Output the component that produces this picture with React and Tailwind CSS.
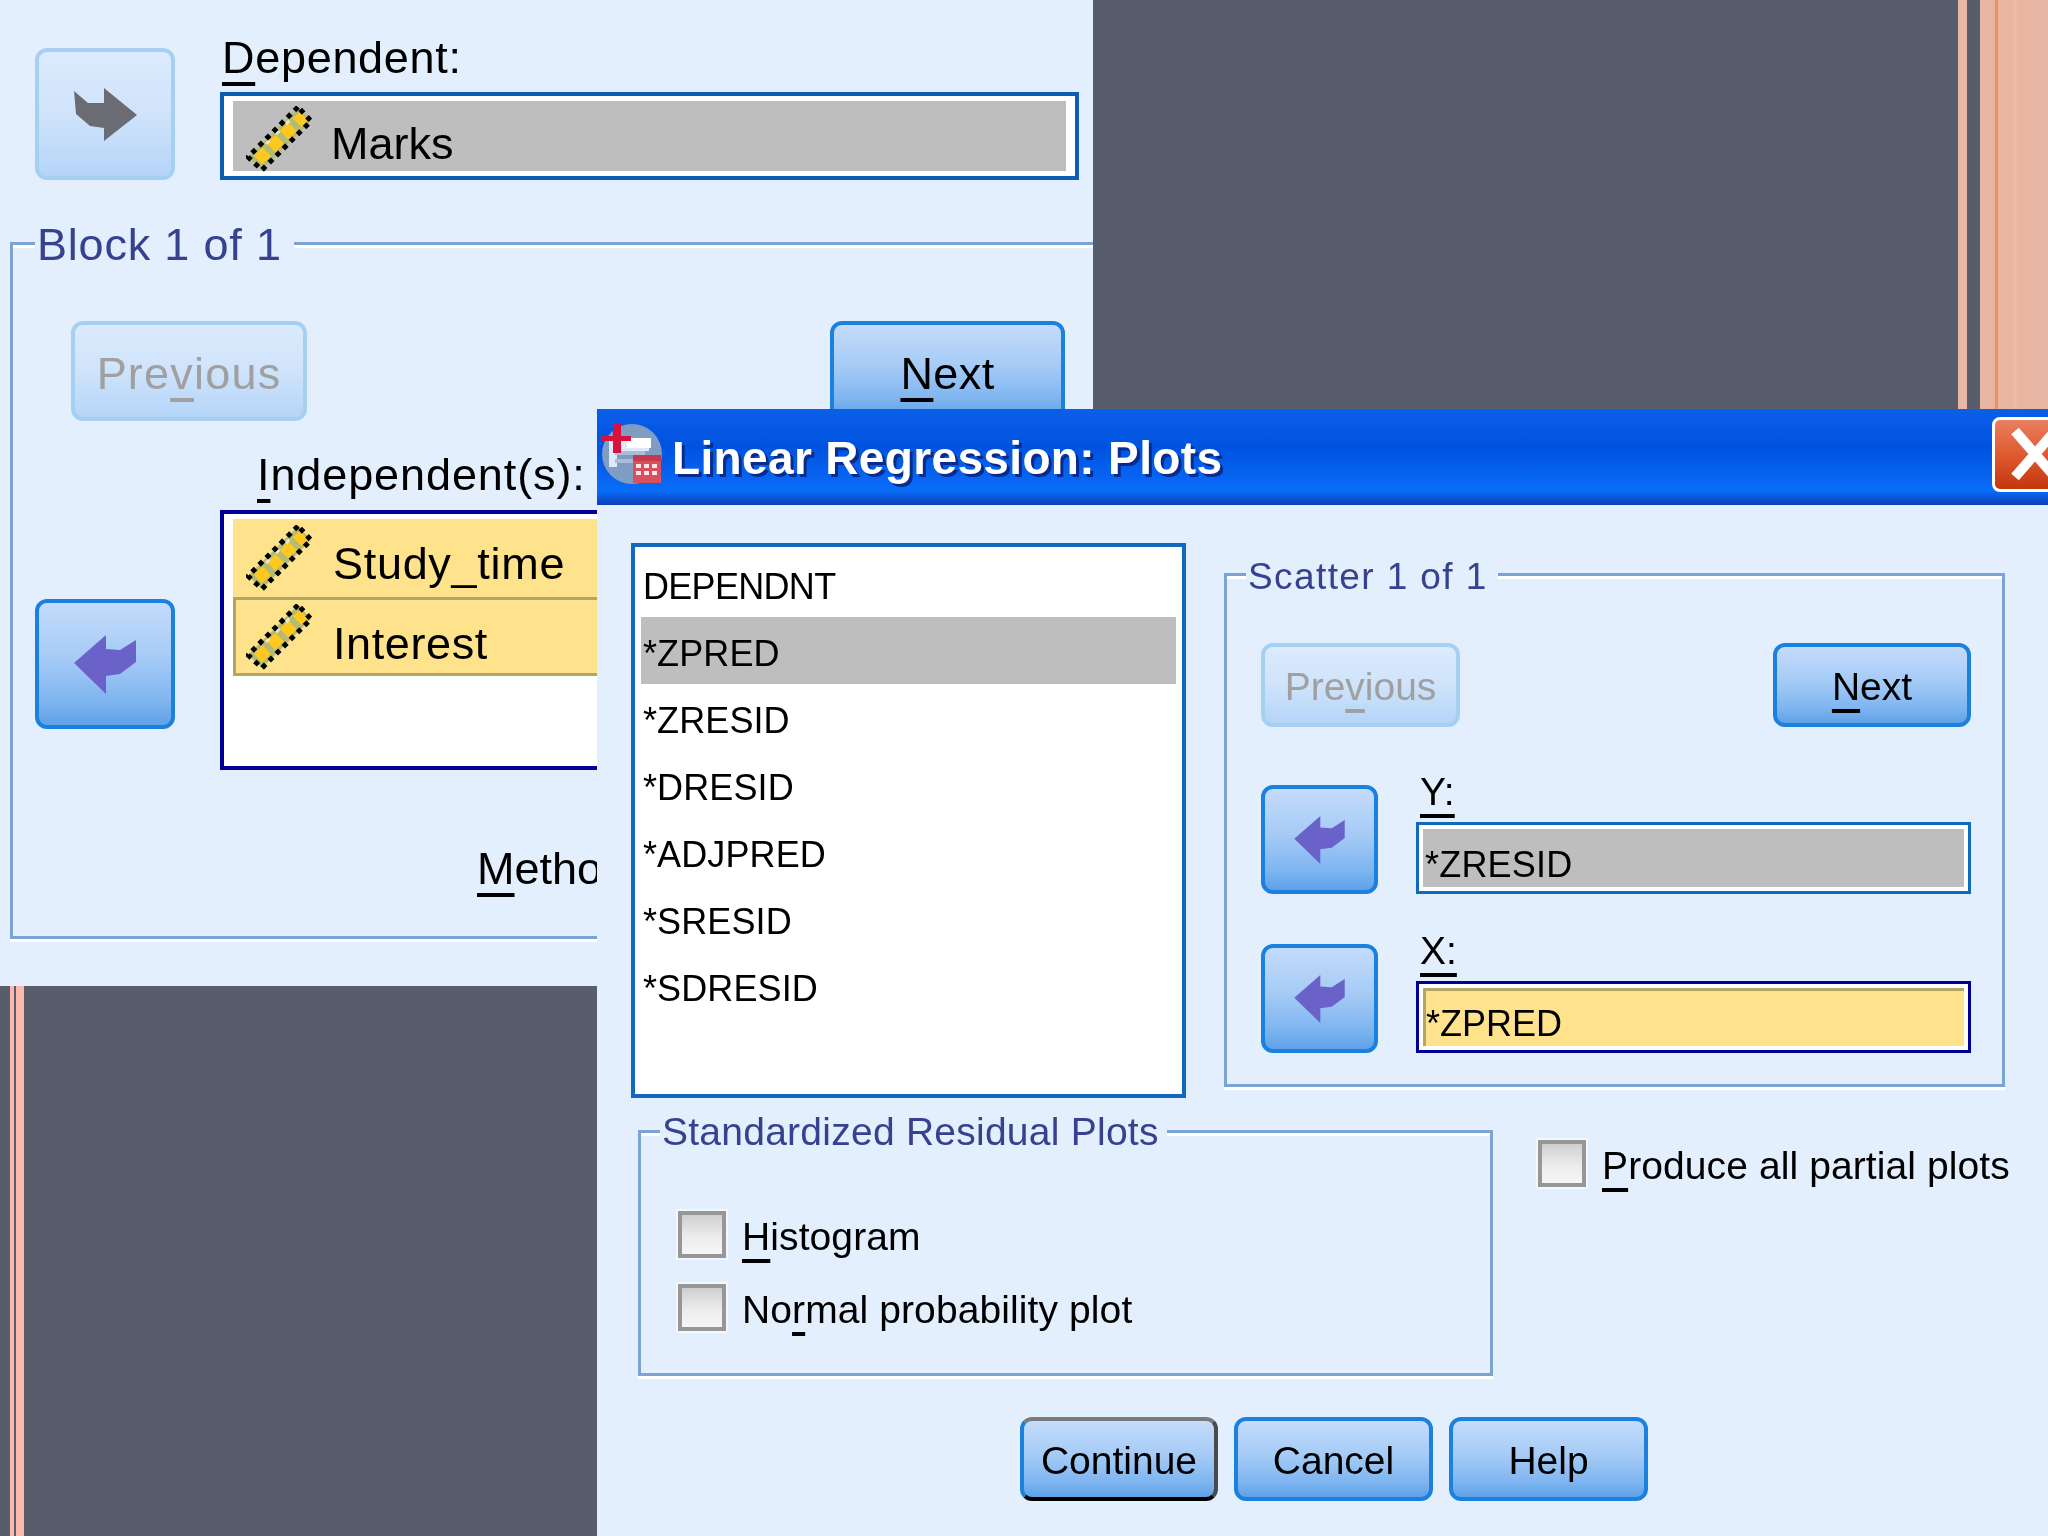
import React from 'react';

const font = "font-['Liberation_Sans',Arial,sans-serif]";

// first-letter mnemonic underline
function Mn({ children }) {
  return (
    <span className="underline decoration-[4px] underline-offset-[9px] [text-decoration-skip-ink:none]">
      {children}
    </span>
  );
}

function Ruler({ className = '' }) {
  return (
    <svg width="66" height="66" viewBox="0 0 66 66" className={`shrink-0 ${className}`}>
      <polygon points="52,1 2,51 16,64 65,15" fill="#b5bb72" />
      <line x1="12" y1="54" x2="58" y2="10" stroke="#ffc81e" strokeWidth="12" strokeDasharray="12 6" />
      <line x1="20" y1="38" x2="46" y2="12" stroke="#e8e8d0" strokeWidth="3" strokeDasharray="5 9" />
      <polygon points="52,1 2,51 16,64 65,15" fill="none" stroke="#000" strokeWidth="5" strokeDasharray="5 5" />
    </svg>
  );
}

function LeftArrow({ w = 62, h = 59, fill = '#6a62c8' }) {
  return (
    <svg width={w} height={h} viewBox="0 0 62 59">
      <polygon points="0,28 32,0 32,14 46,15 62,5 62,27 46,39 32,41 32,59" fill={fill} />
    </svg>
  );
}

function RightArrow() {
  return (
    <svg width="63" height="53" viewBox="0 0 63 53">
      <polygon points="0,3 14,15 30,15 30,0 63,27 30,53 30,40 16,38 2,26" fill="#6b6b73" />
    </svg>
  );
}

const btn =
  'flex items-center justify-center rounded-[12px] border-[4px] border-[#1c80de] bg-[linear-gradient(180deg,#c4dbfb_0%,#a5cbf6_45%,#7fb5f0_80%,#5ea2e8_100%)] text-black';
const btnOff =
  'flex items-center justify-center rounded-[12px] border-[4px] border-[#a6cff4] bg-[linear-gradient(180deg,#dcebfd_0%,#cfe3fb_50%,#b4d5f8_100%)] text-[#a0a0a0]';

function Checkbox() {
  return (
    <div className="w-[48px] h-[47px] shrink-0 border-[4px] border-[#979797] bg-[linear-gradient(180deg,#cfcfcf_0%,#ececec_55%,#f6f6f6_100%)] shadow-[0_0_0_2px_#f4f8fe]" />
  );
}

function CheckRow({ children, className = '' }) {
  return (
    <div className={`flex items-center gap-[16px] ${className}`}>
      <Checkbox />
      <span className="text-[39px] leading-[47px] tracking-[0.1px] text-black whitespace-nowrap pt-[4px]">{children}</span>
    </div>
  );
}

const groupLine = 'border-[3px] border-[#7ba4d2] shadow-[0_3px_0_#fff,inset_0_3px_0_#fff]';
const legendText = 'bg-[#e3effd] text-[#36418f] whitespace-nowrap';

function BackWindow() {
  return (
    <div className="absolute left-0 top-0 w-[1093px] h-[986px] bg-[#e3effd] overflow-hidden text-black text-[45px]">
      <div className="flex pl-[35px] pt-[36px]">
        <div className={`${btnOff} w-[140px] h-[132px] mt-[12px] shrink-0`}>
          <RightArrow />
        </div>
        <div className="ml-[45px] flex-1">
          <div className="h-[56px] leading-[44px] pl-[2px] tracking-[0.7px]">
            <Mn>D</Mn>ependent:
          </div>
          <div className="h-[88px] border-[4px] border-[#0f5cb5] bg-white py-[5px] px-[9px]">
            <div className="h-full bg-[#bebebe] flex items-center pl-[13px]">
              <Ruler className="mt-[5px]" />
              <span className="ml-[19px] pt-[16px]">Marks</span>
            </div>
          </div>
        </div>
        <div className="w-[14px] shrink-0" />
      </div>

      <fieldset className={`${groupLine} ml-[10px] mt-[37px] w-[1300px] pb-[42px]`}>
        <legend className={`${legendText} ml-[22px] pl-[2px] pr-[12px] pt-[4px] leading-[48px] tracking-[0.8px]`}>
          Block 1 of 1
        </legend>
        <div className="flex justify-between w-[994px] ml-[58px] mt-[52px]">
          <div className={`${btnOff} w-[236px] h-[100px] pt-[5px]`}>
            <span className="tracking-[1.2px]">
              Pre<Mn>v</Mn>ious
            </span>
          </div>
          <div className={`${btn} w-[235px] h-[100px] pt-[5px]`}>
            <span className="tracking-[0.4px]">
              <Mn>N</Mn>ext
            </span>
          </div>
        </div>
        <div className="flex ml-[22px]">
          <div className={`${btn} w-[140px] h-[130px] mt-[178px] shrink-0`}>
            <LeftArrow />
          </div>
          <div className="ml-[45px] flex-1">
            <div className="mt-[29px] ml-[37px] leading-[50px] tracking-[0.9px]">
              <Mn>I</Mn>ndependent(s):
            </div>
            <div className="mt-[10px] h-[260px] border-[4px] border-[#000099] bg-white pt-[5px] pl-[9px]">
              <div className="h-[78px] bg-[#ffe28c] flex items-center pl-[13px]">
                <Ruler />
                <span className="ml-[21px] pt-[12px] tracking-[0.7px]">Study_time</span>
              </div>
              <div className="h-[79px] bg-[#ffe28c] border-[3px] border-r-0 border-[#b3a566] flex items-center pl-[10px]">
                <Ruler />
                <span className="ml-[21px] pt-[15px] tracking-[0.6px]">Interest</span>
              </div>
            </div>
            <div className="mt-[74px] ml-[257px] leading-[50px]">
              <Mn>M</Mn>ethod:
            </div>
          </div>
        </div>
      </fieldset>
    </div>
  );
}

const vars = ['DEPENDNT', '*ZPRED', '*ZRESID', '*DRESID', '*ADJPRED', '*SRESID', '*SDRESID'];

function AppIcon() {
  return (
    <svg width="72" height="72" viewBox="0 0 72 72" className="shrink-0">
      <circle cx="33" cy="33" r="30" fill="#7f9cc2" />
      <path d="M10 18 H50 V30 H18 V46 H10 Z" fill="#dfe8f4" />
      <path d="M28 17 H52 V27 H28 Z" fill="#fff" />
      <path d="M16 30 H46 V34 H16 Z M16 38 H34 V42 H16 Z" fill="#a7bedb" />
      <rect x="2" y="15" width="30" height="5" fill="#d8123c" />
      <rect x="14" y="3" width="8" height="29" fill="#d8123c" />
      <rect x="34" y="34" width="28" height="28" fill="#d8505f" />
      <rect x="34" y="34" width="28" height="6" fill="#c5394a" />
      <path d="M37 43 H42 V47 H37 Z M45 43 H50 V47 H45 Z M53 43 H58 V47 H53 Z M37 50 H42 V54 H37 Z M45 50 H50 V54 H45 Z M53 50 H58 V54 H53 Z" fill="#ffe3e6" />
    </svg>
  );
}

function FrontWindow() {
  return (
    <div className="absolute left-[597px] top-[409px] w-[1451px] h-[1127px] bg-[#e3effd] overflow-hidden text-black">
      {/* title bar */}
      <div className="relative h-[96px] flex items-center pl-[2px] bg-[linear-gradient(180deg,#0a5fe8_0%,#0052e0_40%,#0a6df8_85%,#0a3fb8_100%)]">
        <AppIcon />
        <span className="ml-[1px] pt-[2px] text-[46px] tracking-[0.35px] font-bold text-white [text-shadow:3px_3px_0_#0a2a8c] whitespace-nowrap">
          Linear Regression: Plots
        </span>
        <div className="absolute left-[1395px] top-[8px] w-[90px] h-[75px] rounded-[8px] border-[3px] border-white bg-[linear-gradient(180deg,#e8805f_0%,#df5a30_50%,#c2360e_100%)]">
          <svg width="60" height="56" viewBox="0 0 60 56" className="absolute left-[16px] top-[7px]">
            <path d="M4 4 L44 50 M44 4 L4 50" stroke="#fff" strokeWidth="10" />
          </svg>
        </div>
      </div>

      <div className="pl-[34px]">
        <div className="flex items-start mt-[38px]">
          <div className="w-[555px] h-[555px] border-[4px] border-[#0f69bd] bg-white pt-[3px] px-[6px] text-[36px]">
            {vars.map((v) => (
              <div
                key={v}
                className={`h-[67px] pl-[2px] pt-[7px] flex items-center ${v === '*ZPRED' ? 'bg-[#bebebe]' : ''} ${
                  v === 'DEPENDNT' ? 'tracking-[-0.7px]' : 'tracking-[0.1px]'
                }`}
              >
                {v}
              </div>
            ))}
          </div>

          <fieldset className={`${groupLine} ml-[38px] mt-[7px] w-[781px] pb-[31px]`}>
            <legend className={`${legendText} ml-[19px] pl-[2px] pr-[10px] pt-[5px] text-[37px] leading-[44px] tracking-[1.4px]`}>
              Scatter 1 of 1
            </legend>
            <div className="ml-[34px] w-[710px] text-[39px]">
              <div className="flex justify-between mt-[44px]">
                <div className={`${btnOff} w-[199px] h-[84px] pt-[4px]`}>
                  <span>
                    Pre<Mn>v</Mn>ious
                  </span>
                </div>
                <div className={`${btn} w-[198px] h-[84px] pt-[4px]`}>
                  <span>
                    <Mn>N</Mn>ext
                  </span>
                </div>
              </div>

              <div className="flex items-end mt-[44px]">
                <div className={`${btn} w-[117px] h-[109px] shrink-0`}>
                  <LeftArrow w={51} h={48} />
                </div>
                <div className="ml-[38px] flex-1">
                  <div className="h-[51px] leading-[42px] pl-[4px]">
                    <Mn>Y:</Mn>
                  </div>
                  <div className="h-[72px] border-[3px] border-[#0f69bd] bg-white p-[4px]">
                    <div className="h-full bg-[#bebebe] flex items-center pl-[2px] pt-[13px] text-[36px] tracking-[0.2px]">*ZRESID</div>
                  </div>
                </div>
              </div>

              <div className="flex items-end mt-[36px]">
                <div className={`${btn} w-[117px] h-[109px] shrink-0`}>
                  <LeftArrow w={51} h={48} />
                </div>
                <div className="ml-[38px] flex-1">
                  <div className="h-[51px] leading-[42px] pl-[4px]">
                    <Mn>X:</Mn>
                  </div>
                  <div className="h-[72px] border-[3px] border-[#000099] bg-white p-[4px]">
                    <div className="h-full bg-[#ffe28c] border-t-[3px] border-l-[3px] border-[#b3a566] flex items-center pt-[11px] text-[36px]">
                      *ZPRED
                    </div>
                  </div>
                </div>
              </div>
            </div>
          </fieldset>
        </div>

        <div className="flex items-start mt-[10px] ml-[7px]">
          <fieldset className={`${groupLine} w-[855px] pb-[40px]`}>
            <legend className={`${legendText} ml-[19px] pl-[2px] pr-[8px] pt-[2px] text-[39px] leading-[44px] tracking-[0.25px]`}>
              Standardized Residual Plots
            </legend>
            <div className="ml-[37px] mt-[55px] flex flex-col gap-[22px]">
              <CheckRow>
                <Mn>H</Mn>istogram
              </CheckRow>
              <CheckRow>
                No<Mn>r</Mn>mal probability plot
              </CheckRow>
            </div>
          </fieldset>
          <CheckRow className="ml-[45px] mt-[30px]">
            <Mn>P</Mn>roduce all partial plots
          </CheckRow>
        </div>

        <div className="flex gap-[16px] ml-[389px] mt-[41px] text-[39px]">
          <div className={`${btn} w-[198px] h-[84px] pt-[4px] border-t-[#7a7a7a] border-r-[#4a4a4a] border-b-black`}>Continue</div>
          <div className={`${btn} w-[199px] h-[84px] pt-[4px]`}>Cancel</div>
          <div className={`${btn} w-[199px] h-[84px] pt-[4px]`}>Help</div>
        </div>
      </div>
    </div>
  );
}

export default function App() {
  return (
    <div className={`relative w-[2048px] h-[1536px] overflow-hidden bg-[#585d6b] blur-[0.6px] ${font}`}>
      {/* slide edge showing behind the dialogs */}
      <div className="absolute left-[1958px] top-0 w-[9px] h-[409px] bg-[#e9b7a6]" />
      <div className="absolute left-[1980px] top-0 w-[68px] h-[409px] flex bg-[#e8b5a2]">
        <div className="ml-[15px] w-[3px] h-full bg-[#f08f5c]" />
        <div className="ml-[15px] w-[5px] h-full bg-[#f2b9a0]" />
      </div>
      <div className="absolute left-[10px] top-[986px] w-[4px] h-[550px] bg-[#fdb9ae]" />
      <div className="absolute left-[16px] top-[986px] w-[8px] h-[550px] bg-[#fdb9ae]" />

      <BackWindow />
      <FrontWindow />
    </div>
  );
}
